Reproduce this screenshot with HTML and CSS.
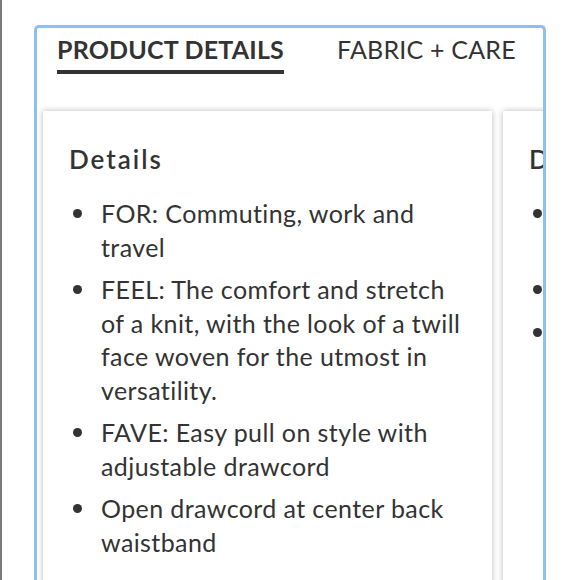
FILE: index.html
```html
<!DOCTYPE html>
<html>
<head>
<meta charset="utf-8">
<link rel="stylesheet" href="styles.css">
</head>
<body>
<div class="page">
  <div class="panel">
    <div class="tabs">
      <div class="tab active">PRODUCT DETAILS</div>
      <div class="tab">FABRIC + CARE</div>
    </div>
    <div class="cards">
      <div class="card">
        <h2 class="card-title">Details</h2>
        <ul class="list">
          <li>FOR: Commuting, work and travel</li>
          <li>FEEL: The comfort and stretch of a knit, with the look of a twill face woven for the utmost in versatility.</li>
          <li>FAVE: Easy pull on style with adjustable drawcord</li>
          <li>Open drawcord at center back waistband</li>
        </ul>
      </div>
      <div class="card">
        <h2 class="card-title">Details</h2>
        <ul class="list">
          <li>Body: 74% polyester, 22% rayon, 4% spandex</li>
          <li>Machine wash cold</li>
          <li>Imported</li>
        </ul>
      </div>
    </div>
  </div>
</div>
</body>
</html>
```
FILE: styles.css
```css
html, body {
  margin: 0;
  padding: 0;
  background: #fff;
}
body {
  font-family: Lato, "Open Sans", sans-serif;
  color: #333;
  overflow: hidden;
}
.page {
  width: 578px;
  height: 580px;
  border-left: 2px solid #7a7a7a;
  padding: 25px 0 0 32px;
  box-sizing: border-box;
  overflow: hidden;
}
.panel {
  width: 512px;
  height: 600px;
  box-sizing: border-box;
  border: 3px solid #8dbff2;
  border-bottom: none;
  border-radius: 5px 5px 0 0;
  overflow: hidden;
}
.tabs {
  display: flex;
  gap: 53px;
  padding: 6px 0 0 20px;
}
.tab {
  font-size: 25px;
  line-height: 30px;
  letter-spacing: 0.2px;
  padding-bottom: 6px;
  border-bottom: 4px solid transparent;
}
.tab.active {
  font-weight: 700;
  border-bottom-color: #333;
}
.cards {
  display: flex;
  gap: 11px;
  padding: 37px 0 0 6px;
}
.card {
  flex: 0 0 449px;
  min-height: 520px;
  box-sizing: border-box;
  padding: 32px 26px 20px 26px;
  background: #fff;
  box-shadow: 0 0 6px rgba(0, 0, 0, 0.28);
}
.card-title {
  margin: 0 0 22px;
  font-size: 26px;
  line-height: 32px;
  font-weight: 600;
  letter-spacing: 2px;
  color: #333;
}
.list {
  margin: 0;
  padding: 0 0 0 32px;
  list-style: none;
  font-size: 25px;
  line-height: 33.5px;
  letter-spacing: 0.4px;
}
.list li {
  position: relative;
  margin-bottom: 9px;
}
.list li::before {
  content: "";
  position: absolute;
  left: -28px;
  top: 12px;
  width: 9px;
  height: 9px;
  border-radius: 50%;
  background: #333;
}
```
